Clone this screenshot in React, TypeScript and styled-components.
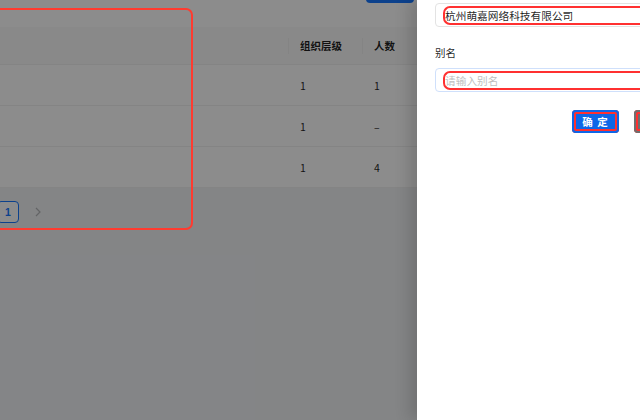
import React from "react";
import styled, { createGlobalStyle } from "styled-components";

const GlobalStyle = createGlobalStyle`
  html, body {
    margin: 0;
    padding: 0;
  }
  body {
    font-family: "Noto Sans CJK SC", "Noto Sans", "Liberation Sans", sans-serif;
    font-size: 10.5px;
    color: rgba(0, 0, 0, 0.88);
  }
`;

const Page = styled.div`
  position: relative;
  width: 640px;
  height: 420px;
  overflow: hidden;
  background: #f0f2f5;
`;

const Main = styled.div`
  display: flex;
  flex-direction: column;
`;

const TableCard = styled.div`
  background: #fff;
`;

const Toolbar = styled.div`
  height: 27px;
  display: flex;
  justify-content: flex-end;
  padding-right: 226px;
`;

const ToolButton = styled.div`
  width: 48px;
  height: 24px;
  margin-top: -21px;
  border-radius: 4px;
  background: #1677ff;
`;

const Row = styled.div<{ $head?: boolean }>`
  display: grid;
  grid-template-columns: 288px 74px 1fr;
  height: ${(p) => (p.$head ? 38 : 41)}px;
  box-sizing: border-box;
  border-bottom: 1px solid #f0f0f0;
  background: ${(p) => (p.$head ? "#fafafa" : "#fff")};
  font-weight: ${(p) => (p.$head ? 600 : 400)};
`;

const Cell = styled.div<{ $divider?: boolean }>`
  position: relative;
  display: flex;
  align-items: center;
  padding: 0 12px;
  &::before {
    content: "";
    display: ${(p) => (p.$divider ? "block" : "none")};
    position: absolute;
    left: 0;
    top: 50%;
    width: 1px;
    height: 16px;
    margin-top: -8px;
    background: #f0f0f0;
  }
`;

const Pager = styled.div`
  display: flex;
  gap: 8px;
  padding-top: 13px;
  margin-left: -33px;
`;

const PageItem = styled.div<{ $active?: boolean }>`
  width: 22px;
  height: 22px;
  box-sizing: border-box;
  display: flex;
  align-items: center;
  justify-content: center;
  border-radius: 4px;
  border: 1px solid ${(p) => (p.$active ? "#1677ff" : "transparent")};
  background: ${(p) => (p.$active ? "#fff" : "transparent")};
  color: ${(p) => (p.$active ? "#1677ff" : "rgba(0,0,0,0.25)")};
  font-family: "Liberation Sans", sans-serif;
  font-weight: 600;
  font-size: 10.5px;
`;

const Mask = styled.div`
  position: absolute;
  inset: 0;
  background: rgba(0, 0, 0, 0.45);
`;

const Annotation = styled.div`
  position: absolute;
  left: -12px;
  top: 8px;
  width: 205px;
  height: 222px;
  box-sizing: border-box;
  border: 2px solid #ff3b30;
  border-radius: 7px;
`;

const Drawer = styled.div`
  position: absolute;
  top: 0;
  left: 417px;
  width: 282px;
  height: 100%;
  box-sizing: border-box;
  padding: 3px 18px 0;
  background: #fff;
  box-shadow: -8px 0 14px rgba(0, 0, 0, 0.14);
`;

const Input = styled.div<{ $focus?: boolean }>`
  height: 24px;
  box-sizing: border-box;
  display: flex;
  align-items: center;
  padding: 0 0 0 7px;
  border: 1px solid ${(p) => (p.$focus ? "#cfe0fb" : "#e3e3e3")};
  border-radius: 4px;
  background: #fff;
`;

const Field = styled.div<{ $placeholder?: boolean }>`
  flex: 1;
  height: 15px;
  display: flex;
  align-items: center;
  border: 2px solid #ff3030;
  border-right: none;
  border-radius: 7px 0 0 7px;
  color: ${(p) => (p.$placeholder ? "#bfbfbf" : "rgba(0,0,0,0.88)")};
  white-space: nowrap;
  font-size: 10.7px;
`;

const Label = styled.div`
  margin: 18px 0 7px;
  height: 16px;
  line-height: 16px;
`;

const Footer = styled.div`
  display: flex;
  justify-content: flex-end;
  gap: 15px;
  margin-top: 18px;
`;

const Button = styled.div<{ $primary?: boolean }>`
  width: 47px;
  height: 23px;
  box-sizing: border-box;
  display: flex;
  align-items: center;
  justify-content: center;
  border-radius: 4px;
  background: ${(p) => (p.$primary ? "#0e66e8" : "#6f6f6f")};
  box-shadow: inset 0 0 0 2px ${(p) => (p.$primary ? "#0e66e8" : "#6f6f6f")},
    inset 0 0 0 4px #ff3030;
  color: #fff;
  font-weight: 700;
  letter-spacing: 1px;
`;

const rows = [
  { level: "1", count: "1" },
  { level: "1", count: "–" },
  { level: "1", count: "4" },
];

const Chevron = () => (
  <svg width="8" height="10" viewBox="0 0 8 10">
    <path d="M2 1 L6 5 L2 9" fill="none" stroke="currentColor" strokeWidth="1.2" />
  </svg>
);

const App = () => (
  <Page>
    <GlobalStyle />
    <Main>
      <TableCard>
        <Toolbar>
          <ToolButton />
        </Toolbar>
        <Row $head>
          <Cell />
          <Cell $divider>组织层级</Cell>
          <Cell $divider>人数</Cell>
        </Row>
        {rows.map((r, i) => (
          <Row key={i}>
            <Cell />
            <Cell>{r.level}</Cell>
            <Cell>{r.count}</Cell>
          </Row>
        ))}
      </TableCard>
      <Pager>
        <PageItem />
        <PageItem $active>1</PageItem>
        <PageItem>
          <Chevron />
        </PageItem>
      </Pager>
    </Main>
    <Mask />
    <Annotation />
    <Drawer>
      <Input>
        <Field>杭州萌嘉网络科技有限公司</Field>
      </Input>
      <Label>别名</Label>
      <Input $focus>
        <Field $placeholder>请输入别名</Field>
      </Input>
      <Footer>
        <Button $primary>确 定</Button>
        <Button />
      </Footer>
    </Drawer>
  </Page>
);

export default App;
